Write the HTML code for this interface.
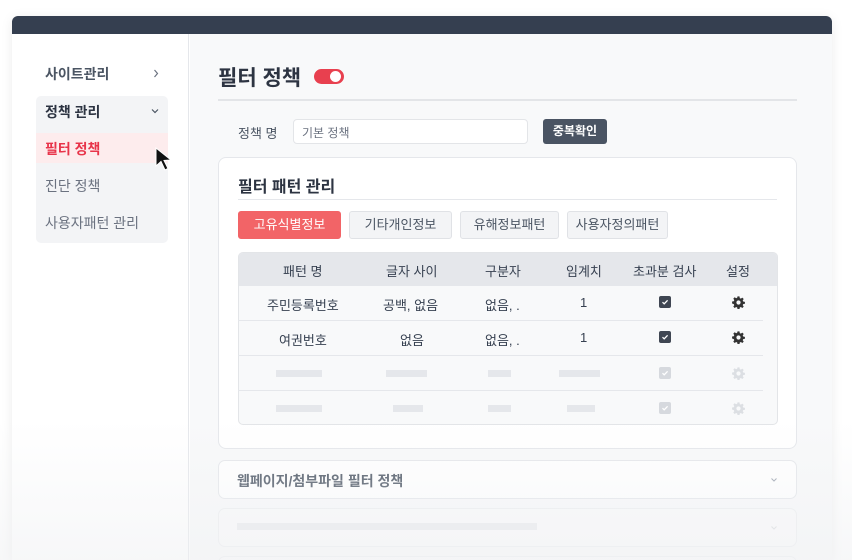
<!DOCTYPE html>
<html><head><meta charset="utf-8"><style>
*{box-sizing:border-box;margin:0;padding:0}
html,body{width:852px;height:560px;overflow:hidden}
body{background:#fff;font-family:"Liberation Sans","Noto Sans CJK KR",sans-serif;position:relative;color:#374151}
.win{position:absolute;left:12px;top:16px;width:820px;height:544px;border-radius:6px 6px 0 0;overflow:hidden;box-shadow:0 2px 12px rgba(0,0,0,.08)}
.hdr{height:18px;background:#353f50}
.side{position:absolute;left:0;top:18px;width:177px;bottom:0;background:#fff;border-right:1px solid #e5e7eb}
.main{position:absolute;left:178px;top:18px;right:0;bottom:0;background:#f8f9fa}
.abs{position:absolute}
.t{position:absolute;white-space:nowrap;font-size:13px}
.tab{position:absolute;top:211px;height:28px;border:1px solid #e0e2e6;background:#f3f4f6;border-radius:3px;font-size:13px;color:#4b5563;text-align:center;line-height:26px}
.sk{position:absolute;height:7px;background:#e5e7eb}
.cb{position:absolute;width:12px;height:12px;border-radius:2px;background:#3f4652}
.hr{position:absolute;left:238px;width:525px;height:1px;background:#e5e7eb}
.g{position:absolute;width:13px;height:13px}
</style></head><body>
<svg width="0" height="0" style="position:absolute"><defs>
<symbol id="gear" viewBox="0 0 16 16"><path d="M6.8 0.5h2.4l.4 2.1 1.3.6 1.8-1.2 1.7 1.7-1.2 1.8.6 1.3 2.1.4v2.4l-2.1.4-.6 1.3 1.2 1.8-1.7 1.7-1.8-1.2-1.3.6-.4 2.1H6.8l-.4-2.1-1.3-.6-1.8 1.2-1.7-1.7 1.2-1.8-.6-1.3L.1 9.2V6.8l2.1-.4.6-1.3L1.6 3.3l1.7-1.7 1.8 1.2 1.3-.6z M8 5.4A2.6 2.6 0 1 0 8 10.6 2.6 2.6 0 1 0 8 5.4z" fill-rule="evenodd"/></symbol>
<symbol id="chk" viewBox="0 0 12 12"><path d="M3.5 6.2 5.2 7.8 8.6 4.3" fill="none" stroke="#fff" stroke-width="1.3"/></symbol>
</defs></svg>
<div class="win"><div class="hdr"></div><div class="side"></div><div class="main"></div></div>
<!-- sidebar -->
<div class="t" style="left:45px;top:64px;font-size:14px;color:#4b5563;font-weight:bold">사이트관리</div>
<svg class="abs" style="left:153px;top:69px" width="6" height="9" viewBox="0 0 6 9"><path d="M1.5 1 4.5 4.5 1.5 8" fill="none" stroke="#6b7280" stroke-width="1.2"/></svg>
<div class="abs" style="left:36px;top:96px;width:132px;height:147px;background:#f3f4f6;border-radius:5px"></div>
<div class="t" style="left:45px;top:102px;font-size:14px;font-weight:bold;color:#2d3442">정책 관리</div>
<svg class="abs" style="left:151px;top:108px" width="8" height="6" viewBox="0 0 8 6"><path d="M1 1.5 4 4.5 7 1.5" fill="none" stroke="#4b5563" stroke-width="1.2"/></svg>
<div class="abs" style="left:36px;top:133px;width:132px;height:30px;background:#fdeced"></div>
<div class="t" style="left:45px;top:139px;font-size:14px;font-weight:bold;color:#e8344a">필터 정책</div>
<svg class="abs" style="left:154px;top:146px" width="22" height="28" viewBox="0 0 22 28"><path d="M2 2 L2 20 L7 15.5 L11 24 L14 22.5 L10 14.5 L17 14 Z" fill="#111" stroke="#fff" stroke-width="1"/></svg>
<div class="t" style="left:45px;top:176px;font-size:14px;color:#6b7280">진단 정책</div>
<div class="t" style="left:45px;top:213px;font-size:14px;color:#6b7280">사용자패턴 관리</div>
<!-- main -->
<div class="t" style="left:218px;top:62px;font-size:21px;font-weight:bold;color:#2d3442">필터 정책</div>
<div class="abs" style="left:314px;top:69px;width:30px;height:15px;border-radius:8px;background:#e8404f"></div>
<div class="abs" style="left:330px;top:71px;width:11px;height:11px;border-radius:6px;background:#fff"></div>
<div class="abs" style="left:218px;top:99px;width:579px;height:2px;background:#e3e5e8"></div>
<div class="t" style="left:238px;top:123px;color:#4b5563">정책 명</div>
<div class="abs" style="left:293px;top:119px;width:235px;height:25px;background:#fff;border:1px solid #e3e5e8;border-radius:4px"></div>
<div class="t" style="left:302px;top:124px;font-size:12px;color:#6b7280">기본 정책</div>
<div class="abs" style="left:543px;top:119px;width:64px;height:25px;background:#4a5463;border-radius:3px;color:#fff;font-size:12px;text-align:center;line-height:25px;font-weight:bold">중복확인</div>
<div class="abs" style="left:218px;top:157px;width:579px;height:292px;background:#fff;border:1px solid #e5e7eb;border-radius:8px"></div>
<div class="t" style="left:238px;top:173px;font-size:16px;font-weight:bold;color:#2d3442">필터 패턴 관리</div>
<div class="abs" style="left:238px;top:199px;width:539px;height:1px;background:#e5e7eb"></div>
<div class="tab" style="left:238px;width:103px;background:#f26467;border-color:#f26467;color:#fff">고유식별정보</div>
<div class="tab" style="left:349px;width:103px">기타개인정보</div>
<div class="tab" style="left:460px;width:99px">유해정보패턴</div>
<div class="tab" style="left:567px;width:101px">사용자정의패턴</div>
<div class="abs" style="left:238px;top:252px;width:540px;height:173px;background:#f8f9fa;border:1px solid #e3e5e8;border-radius:5px;overflow:hidden"><div style="height:33px;background:#e5e7eb"></div></div>
<div class="t" style="left:283px;top:261px">패턴 명</div>
<div class="t" style="left:386px;top:261px">글자 사이</div>
<div class="t" style="left:485px;top:261px">구분자</div>
<div class="t" style="left:566px;top:261px">임계치</div>
<div class="t" style="left:633px;top:261px">초과분 검사</div>
<div class="t" style="left:726px;top:261px">설정</div>
<div class="t" style="left:267px;top:295px">주민등록번호</div>
<div class="t" style="left:383px;top:295px">공백, 없음</div>
<div class="t" style="left:485px;top:295px">없음, .</div>
<div class="t" style="left:580px;top:295px">1</div>
<svg class="cb" style="left:659px;top:296px"><use href="#chk"/></svg>
<svg class="g" style="left:732px;top:296px;fill:#333"><use href="#gear"/></svg>
<div class="hr" style="top:320px"></div>
<div class="t" style="left:279px;top:330px">여권번호</div>
<div class="t" style="left:400px;top:330px">없음</div>
<div class="t" style="left:485px;top:330px">없음, .</div>
<div class="t" style="left:580px;top:330px">1</div>
<svg class="cb" style="left:659px;top:331px"><use href="#chk"/></svg>
<svg class="g" style="left:732px;top:331px;fill:#333"><use href="#gear"/></svg>
<div class="hr" style="top:355px"></div>
<div class="sk" style="left:276px;top:370px;width:46px"></div>
<div class="sk" style="left:386px;top:370px;width:41px"></div>
<div class="sk" style="left:488px;top:370px;width:23px"></div>
<div class="sk" style="left:559px;top:370px;width:41px"></div>
<svg class="cb" style="left:659px;top:367px;background:#d6d9de"><use href="#chk"/></svg>
<svg class="g" style="left:732px;top:367px;fill:#dcdfe3"><use href="#gear"/></svg>
<div class="hr" style="top:390px"></div>
<div class="sk" style="left:276px;top:405px;width:46px"></div>
<div class="sk" style="left:393px;top:405px;width:30px"></div>
<div class="sk" style="left:488px;top:405px;width:23px"></div>
<div class="sk" style="left:567px;top:405px;width:28px"></div>
<svg class="cb" style="left:659px;top:402px;background:#d6d9de"><use href="#chk"/></svg>
<svg class="g" style="left:732px;top:402px;fill:#dcdfe3"><use href="#gear"/></svg>
<div class="abs" style="left:218px;top:460px;width:579px;height:39px;background:#fff;border:1px solid #e5e7eb;border-radius:7px"></div>
<div class="t" style="left:237px;top:471px;font-size:14px;font-weight:bold;color:#4b5563">웹페이지/첨부파일 필터 정책</div>
<svg class="abs" style="left:770px;top:477px" width="8" height="6" viewBox="0 0 8 6"><path d="M1.5 1.5 4 4 6.5 1.5" fill="none" stroke="#9ca3af" stroke-width="1"/></svg>
<div class="abs" style="left:218px;top:508px;width:579px;height:39px;background:#fafafb;border:1px solid #eceef0;border-radius:7px"></div>
<div class="sk" style="left:237px;top:523px;width:300px;background:#e9eaed"></div>
<svg class="abs" style="left:770px;top:525px" width="8" height="6" viewBox="0 0 8 6"><path d="M1.5 1.5 4 4 6.5 1.5" fill="none" stroke="#d8dadf" stroke-width="1"/></svg>
<div class="abs" style="left:218px;top:556px;width:579px;height:20px;background:#fafafb;border:1px solid #eceef0;border-radius:7px"></div>
<div class="abs" style="left:0;top:420px;width:852px;height:140px;background:linear-gradient(rgba(240,241,243,0),rgba(240,241,243,.55))"></div>
</body></html>
